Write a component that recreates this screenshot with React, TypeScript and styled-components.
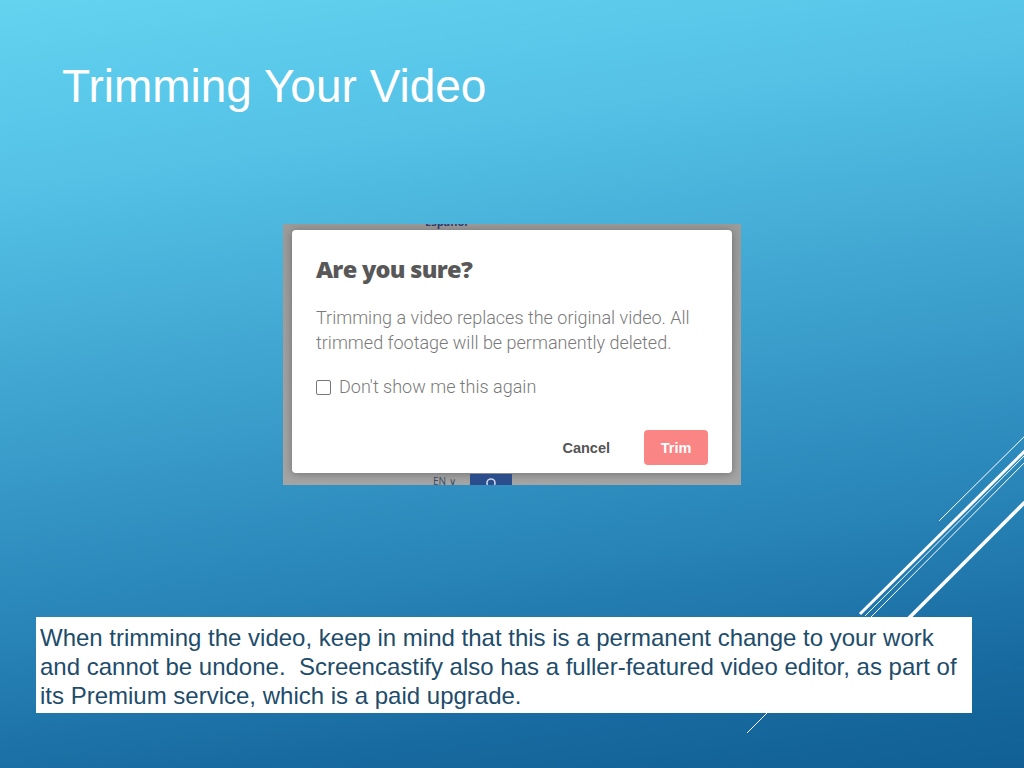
import styled, { createGlobalStyle } from "styled-components";

const GlobalStyle = createGlobalStyle`
  html, body {
    margin: 0;
    padding: 0;
  }
  body {
    font-family: "Liberation Sans", Arial, sans-serif;
  }
`;

const Slide = styled.div`
  position: relative;
  width: 1024px;
  height: 768px;
  overflow: hidden;
  background: linear-gradient(
    172deg,
    #63d3f0 0%,
    #55c2e6 20%,
    #3ea3cf 45%,
    #2a86b9 68%,
    #176a9f 88%,
    #115f95 100%
  );
`;

const Title = styled.h1`
  margin: 0;
  padding: 60px 0 0 62px;
  font-family: "Liberation Sans", Arial, sans-serif;
  font-weight: 400;
  font-size: 46px;
  line-height: 52px;
  color: #ffffff;
`;

const Shot = styled.div`
  position: relative;
  z-index: 1;
  margin: 112px 0 0 283px;
  width: 458px;
  height: 261px;
  background: linear-gradient(180deg, #9b9b9b 0%, #a4a4a4 100%);
  overflow: hidden;
  display: flex;
  flex-direction: column;
`;

const TopStrip = styled.div`
  height: 6px;
  flex: none;
  padding-left: 142px;
  overflow: hidden;
`;

const Cut = styled.span`
  display: block;
  margin-top: -8px;
  font-family: "Open Sans", sans-serif;
  font-weight: 700;
  font-size: 11px;
  line-height: 12px;
  color: #2d3f73;
`;

const Middle = styled.div`
  flex: 1;
  display: flex;
  padding: 0 9px;
`;

const Dialog = styled.div`
  flex: 1;
  background: #ffffff;
  border-radius: 4px;
  box-shadow: 0 1px 8px rgba(0, 0, 0, 0.3);
  padding: 24px 24px 8px 24px;
  display: flex;
  flex-direction: column;
`;

const DialogTitle = styled.h2`
  margin: 0;
  font-family: "Open Sans", sans-serif;
  font-weight: 800;
  font-size: 23.5px;
  line-height: 30px;
  letter-spacing: -0.7px;
  color: #585858;
`;

const Body = styled.p`
  margin: 21px 0 0;
  font-family: Roboto, "Liberation Sans", sans-serif;
  font-weight: 300;
  font-size: 18px;
  line-height: 25px;
  color: #7a7a7a;
`;

const CheckRow = styled.label`
  display: flex;
  align-items: center;
  gap: 8px;
  margin-top: 21px;
  font-family: Roboto, "Liberation Sans", sans-serif;
  font-weight: 300;
  font-size: 18px;
  line-height: 22px;
  color: #7a7a7a;
`;

const Box = styled.span`
  width: 13px;
  height: 13px;
  border: 1.5px solid #777777;
  border-radius: 2px;
`;

const Actions = styled.div`
  margin-top: auto;
  display: flex;
  justify-content: flex-end;
  align-items: center;
  gap: 34px;
`;

const Button = styled.button<{ $primary?: boolean }>`
  border: none;
  border-radius: 4px;
  height: 35px;
  padding: 0 ${(p) => (p.$primary ? "15px" : "0")};
  min-width: ${(p) => (p.$primary ? "64px" : "0")};
  background: ${(p) => (p.$primary ? "#f98585" : "transparent")};
  color: ${(p) => (p.$primary ? "#ffffff" : "#555555")};
  font-family: "Liberation Sans", Arial, sans-serif;
  font-weight: 700;
  font-size: 14.5px;
`;

const BottomStrip = styled.div`
  height: 12px;
  flex: none;
  display: flex;
  align-items: flex-end;
  padding-left: 150px;
  gap: 14px;
`;

const Lang = styled.span`
  font-family: "Open Sans", sans-serif;
  font-size: 10px;
  line-height: 8px;
  color: #3a4a66;
`;

const SearchBtn = styled.span`
  width: 42px;
  height: 11px;
  background: #2c4d8c;
  display: flex;
  justify-content: center;
  padding-top: 3px;
  box-sizing: border-box;
`;

const Caption = styled.div`
  position: relative;
  z-index: 1;
  margin: 132px 0 0 36px;
  width: 936px;
  height: 96px;
  box-sizing: border-box;
  background: #ffffff;
  padding: 6px 4px 0 4px;
  font-family: "Liberation Sans", Arial, sans-serif;
  font-size: 24px;
  line-height: 29px;
  white-space: nowrap;
  color: #1e4c6b;
`;

const Lines = styled.svg`
  position: absolute;
  inset: 0;
  z-index: 0;
  pointer-events: none;
`;

export default function App() {
  return (
    <>
      <GlobalStyle />
      <Slide>
        <Lines width="1024" height="768" viewBox="0 0 1024 768">
          <g stroke="#ffffff" strokeLinecap="butt">
            <line x1="1040" y1="421" x2="939" y2="521" strokeWidth="1" />
            <line x1="1040" y1="436" x2="860" y2="614" strokeWidth="3" />
            <line x1="1040" y1="440" x2="865" y2="616" strokeWidth="1" />
            <line x1="1040" y1="447" x2="871" y2="617" strokeWidth="1" />
            <line x1="1040" y1="487" x2="908" y2="619" strokeWidth="3.5" />
            <line x1="772" y1="708" x2="747" y2="733" strokeWidth="1" />
          </g>
        </Lines>
        <Title>Trimming Your Video</Title>
        <Shot>
          <TopStrip>
            <Cut>Español</Cut>
          </TopStrip>
          <Middle>
            <Dialog>
              <DialogTitle>Are you sure?</DialogTitle>
              <Body>
                Trimming a video replaces the original video. All
                <br />
                trimmed footage will be permanently deleted.
              </Body>
              <CheckRow>
                <Box />
                Don't show me this again
              </CheckRow>
              <Actions>
                <Button>Cancel</Button>
                <Button $primary>Trim</Button>
              </Actions>
            </Dialog>
          </Middle>
          <BottomStrip>
            <Lang>EN ∨</Lang>
            <SearchBtn>
              <svg width="12" height="12" viewBox="0 0 12 12">
                <circle cx="6" cy="6" r="4" fill="none" stroke="#c9d3e8" strokeWidth="1.6" />
              </svg>
            </SearchBtn>
          </BottomStrip>
        </Shot>
        <Caption>
          When trimming the video, keep in mind that this is a permanent change to your work
          <br />
          and cannot be undone.&nbsp; Screencastify also has a fuller-featured video editor, as part of
          <br />
          its Premium service, which is a paid upgrade.
        </Caption>
      </Slide>
    </>
  );
}
